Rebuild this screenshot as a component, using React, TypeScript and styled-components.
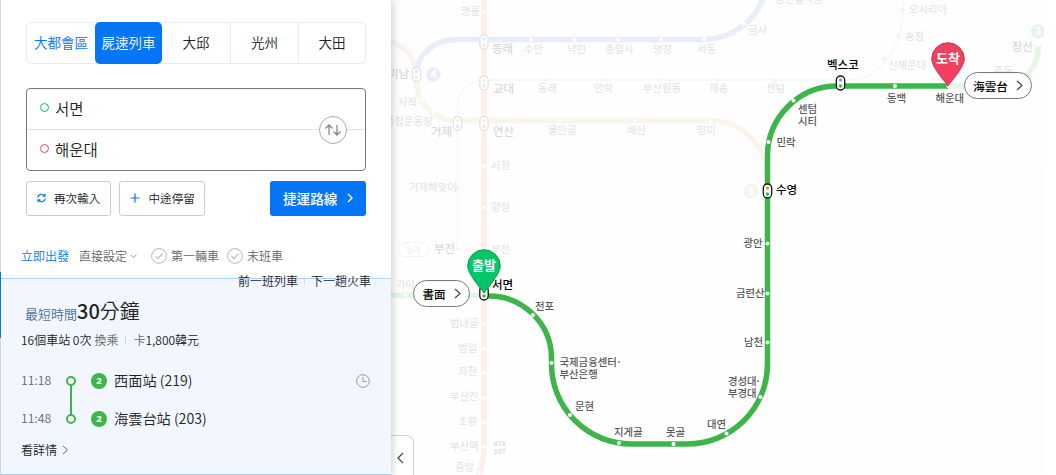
import React from "react";
import styled, { createGlobalStyle } from "styled-components";

const Global = createGlobalStyle`
  body { margin: 0; background: #fff; overflow: hidden; }
  * { box-sizing: border-box; }
  button { font: inherit; padding: 0; margin: 0; background: none; border: 0; }
`;

const GREEN = "#3db54a";
const BLUE = "#0475f4";

const Page = styled.div`
  position: relative;
  display: flex;
  width: 1056px;
  height: 475px;
  overflow: hidden;
  font-family: "Noto Sans CJK KR", "Noto Sans CJK TC", sans-serif;
  font-weight: 350;
  color: #222;
`;

const Panel = styled.aside`
  position: relative;
  z-index: 2;
  flex: none;
  width: 391px;
  height: 475px;
  display: flex;
  flex-direction: column;
  background: #fff;
  border-left: 1px solid #d5d5d5;
  box-shadow: 1px 0 8px rgba(0, 0, 0, 0.22);
`;

const Tabs = styled.nav`
  display: flex;
  width: 340px;
  height: 42px;
  margin: 22px 0 0 25px;
  border: 1px solid #ebebeb;
  border-radius: 5px;
`;

const Tab = styled.button<{ $w: number; $active?: boolean; $blue?: boolean; $line?: boolean }>`
  width: ${(p) => p.$w}px;
  height: ${(p) => (p.$active ? 42 : 40)}px;
  margin-top: ${(p) => (p.$active ? -1 : 0)}px;
  padding-bottom: 1px;
  font-size: 13.5px;
  line-height: 39px;
  text-align: center;
  white-space: nowrap;
  color: ${(p) => (p.$active ? "#fff" : p.$blue ? BLUE : "#222")};
  background: ${(p) => (p.$active ? BLUE : "transparent")};
  border-radius: ${(p) => (p.$active ? "5px" : "0")};
  border-right: ${(p) => (p.$line ? "1px solid #ebebeb" : "0")};
`;

const SearchBox = styled.div`
  position: relative;
  width: 340px;
  height: 83px;
  margin: 24px 0 0 25px;
  border: 1px solid #777;
  border-radius: 4px;
`;

const Field = styled.div<{ $line?: boolean }>`
  display: flex;
  align-items: center;
  gap: 6px;
  height: ${(p) => (p.$line ? 41 : 40)}px;
  padding: 0 0 3px 13px;
  font-size: 15.5px;
  line-height: 36px;
  color: #222;
  border-bottom: ${(p) => (p.$line ? "1px solid #e2e2e2" : "0")};
`;

const Ring = styled.i<{ $c: string }>`
  width: 9px;
  height: 9px;
  border: 1.5px solid ${(p) => p.$c};
  border-radius: 50%;
`;

const Swap = styled.button`
  position: absolute;
  right: 18px;
  top: 27px;
  width: 28px;
  height: 28px;
  border: 1px solid #aaa;
  border-radius: 50%;
  background: #fff;
  display: flex;
  align-items: center;
  justify-content: center;
`;

const Actions = styled.div`
  display: flex;
  gap: 8px;
  width: 340px;
  height: 35px;
  margin: 10px 0 0 25px;
`;

const Outline = styled.button<{ $w: number; $gap: number }>`
  width: ${(p) => p.$w}px;
  display: flex;
  align-items: center;
  gap: ${(p) => p.$gap}px;
  padding: 0 0 1px 10px;
  border: 1px solid #ccc;
  border-radius: 3px;
  font-size: 11.6px;
  white-space: nowrap;
  color: #222;
`;

const Primary = styled.button`
  width: 96px;
  margin-left: auto;
  display: flex;
  align-items: center;
  gap: 10px;
  padding: 0 0 1px 13px;
  border-radius: 3px;
  background: ${BLUE};
  color: #fff;
  font-size: 13.6px;
  font-weight: 500;
  white-space: nowrap;
`;

const Options = styled.div`
  display: flex;
  align-items: center;
  height: 20px;
  margin: 30px 0 0 20px;
  font-size: 12px;
  line-height: 20px;
  color: #666;
  white-space: nowrap;
`;

const Now = styled.span`
  width: 58px;
  color: ${BLUE};
`;

const Choice = styled.span<{ $w: number; $gap: number }>`
  display: flex;
  align-items: center;
  gap: ${(p) => p.$gap}px;
  width: ${(p) => p.$w}px;
`;

const Result = styled.section`
  position: relative;
  margin-top: 12px;
  height: 197px;
  padding-left: 20px;
  background: #f2f7ff;
  border-top: 1px solid #a9cffb;
  border-bottom: 1px solid #a9cffb;
  white-space: nowrap;
`;

const Marker = styled.i`
  position: absolute;
  left: -1px;
  top: -7px;
  width: 1px;
  height: 66px;
  background: ${BLUE};
`;

const Trains = styled.div`
  display: flex;
  justify-content: flex-end;
  align-items: center;
  gap: 6px;
  height: 16px;
  margin-top: -6px;
  padding-right: 20px;
  font-size: 12px;
  line-height: 16px;
`;

const Divider = styled.i`
  width: 1px;
  height: 8px;
  background: #d4d8df;
`;

const Duration = styled.div`
  display: flex;
  align-items: baseline;
  height: 30px;
  margin-top: 7px;
  padding-left: 4px;
  line-height: 30px;
`;

const Kind = styled.span`
  font-size: 13px;
  color: #4c7094;
`;

const Minutes = styled.span`
  font-size: 20px;
  line-height: 30px;
  color: #222;
  b { font-weight: 500; }
`;

const Summary = styled.div`
  display: flex;
  align-items: center;
  height: 18px;
  margin-top: 5px;
  font-size: 12px;
  line-height: 18px;
`;

const Muted = styled.span`
  color: #666;
`;

const Gap = styled.i<{ $w: number }>`
  width: ${(p) => p.$w}px;
`;

const Route = styled.div`
  display: flex;
  margin-top: 22px;
`;

const Times = styled.div`
  display: grid;
  grid-template-rows: 38px 20px;
  width: 42px;
  font-size: 12.3px;
  line-height: 19px;
  color: #666;
`;

const Stops = styled.div`
  display: grid;
  grid-template-rows: 38px 20px;
  margin-left: 12px;
  width: 240px;
`;

const Stop = styled.div`
  display: flex;
  align-items: center;
  gap: 7px;
  height: 19px;
  font-size: 14.2px;
  line-height: 19px;
`;

const Badge = styled.i`
  width: 16px;
  height: 16px;
  margin-top: 1px;
  border-radius: 50%;
  background: ${GREEN};
  color: #fff;
  font: 700 9.5px/16px "Noto Sans", sans-serif;
  text-align: center;
`;

const Clock = styled.svg`
  margin: 3px 0 0 25px;
`;

const Detail = styled.div`
  display: flex;
  align-items: center;
  gap: 5px;
  height: 20px;
  margin-top: 11px;
  font-size: 12px;
  line-height: 20px;
`;

const Fold = styled.button`
  position: absolute;
  z-index: 1;
  left: 391px;
  top: 435px;
  width: 23px;
  height: 46px;
  padding-right: 3px;
  background: #fff;
  border: 1px solid #d0d0d0;
  border-left: 0;
  border-radius: 0 8px 8px 0;
  display: flex;
  align-items: center;
  justify-content: center;
`;

const MapArea = styled.main`
  flex: none;
  width: 665px;
  height: 475px;
`;

const MapSvg = styled.svg`
  display: block;
  font-weight: 400;
  text { font-size: 10.4px; font-family: "Noto Sans CJK KR", sans-serif; }
`;

const Pill = styled.button<{ $x: number; $y: number; $w: number }>`
  position: absolute;
  left: ${(p) => p.$x}px;
  top: ${(p) => p.$y}px;
  width: ${(p) => p.$w}px;
  height: 27px;
  display: flex;
  align-items: center;
  justify-content: center;
  gap: 8px;
  background: #fff;
  border: 1px solid #777;
  border-radius: 14px;
  color: #000;
  font-size: 11.5px;
  font-weight: 500;
  white-space: nowrap;
`;

const Chevron = ({ w = 5, h = 9, c = "#444", left = false, sw = 1.2 }) => (
  <svg width={w + 2} height={h + 2} viewBox={`-1 -1 ${w + 2} ${h + 2}`} fill="none" stroke={c} strokeWidth={sw}>
    <path d={left ? `M${w} 0L0 ${h / 2}L${w} ${h}` : `M0 0L${w} ${h / 2}L0 ${h}`} />
  </svg>
);

const Check = () => (
  <svg width="16" height="16" viewBox="0 0 16 16" fill="none" stroke="#c4c4c4" strokeWidth="1.1">
    <circle cx="8" cy="8" r="7.4" />
    <path d="M4.5 8l2.5 2.5L11.5 5.7" strokeWidth="1.4" />
  </svg>
);

type Label = [string, number, number];

const routeLabels: Label[] = [
  ["전포", 535, 310], ["국제금융센터", 559.5, 366], ["부산은행", 559.5, 377.5],
  ["문현", 575, 410], ["지게골", 614, 436], ["못골", 666, 436], ["대연", 707, 428],
  ["경성대", 728, 384.5], ["부경대", 728, 396.5], ["남천", 744, 345.5],
  ["금련산", 736, 296.5], ["광안", 743.5, 247], ["민락", 776.5, 145.5],
  ["센텀", 798, 113], ["시티", 798, 125], ["동백", 887, 102], ["해운대", 935.5, 102],
];

const fadedLabels: Label[] = [
  ["명륜", 461, 15], ["수안", 524, 53], ["낙민", 567, 53], ["충렬사", 605, 53], ["명장", 653, 53],
  ["서동", 697, 53], ["금사", 748, 34], ["동래", 538, 92], ["안락", 594, 92], ["부산원동", 643, 92],
  ["재송", 709, 92], ["센텀", 766, 92], ["사직", 398, 106], ["종합운동장", 385, 125],
  ["물만골", 548, 134], ["배산", 627, 134], ["망미", 697, 134], ["시청", 491, 169],
  ["거제해맞이", 409, 191], ["양정", 491, 211], ["부전", 491, 252.5], ["가야", 396, 288],
  ["범내골", 450, 327], ["범일", 458, 352], ["좌천", 458, 375], ["부산진", 450, 400],
  ["초량", 458, 425], ["부산역", 450, 450], ["중앙", 455, 471], ["오시리아", 909, 13],
  ["송정", 905, 40], ["신해운대", 888, 69], ["중동", 994, 75], ["경전철사상", 775, 3],
];

const hubLabels: Label[] = [
  ["동래", 492, 53], ["교대", 493, 92.5], ["연산", 493, 136], ["거제", 431, 136],
  ["미남", 388, 78], ["부전", 434, 252.5], ["장산", 1012, 51],
];

const dots = (pts: number[][], fill: string, r = 2) =>
  pts.map(([x, y]) => <circle key={`${x}-${y}`} cx={x} cy={y} r={r} fill={fill} />);

const Hub = ({ x, y, a, b, c = "#e3e3e3" }: { x: number; y: number; a: string; b: string; c?: string }) => (
  <g>
    <rect x={x - 4.2} y={y - 7} width="8.4" height="14" rx="4.2" fill="#fff" stroke={c} strokeWidth="1.3" />
    <circle cx={x} cy={y - 3} r="1.7" fill={a} />
    <circle cx={x} cy={y + 3} r="1.7" fill={b} />
  </g>
);

const Pin = ({ x, y, fill, stroke, label }: { x: number; y: number; fill: string; stroke: string; label: string }) => (
  <g transform={`translate(${x} ${y})`}>
    <path d="M0 43.5C-2 40-16.3 25-16.3 16.5A16.3 16.3 0 0 1 16.3 16.5C16.3 25 2 40 0 43.5Z" fill={fill} stroke={stroke} />
    <text x="0" y="20.5" textAnchor="middle" fill="#fff" style={{ fontSize: 13, fontWeight: 700 }}>{label}</text>
  </g>
);

const LineBadge = ({ x, y, n, fill }: { x: number; y: number; n: string; fill: string }) => (
  <g>
    <circle cx={x} cy={y} r="7.2" fill={fill} />
    <text x={x} y={y + 3.6} textAnchor="middle" fill="#fff" fontWeight="700">{n}</text>
  </g>
);

const SubwayMap = () => (
  <MapSvg width="665" height="475" viewBox="391 0 665 475" fill="none">
    <rect x="391" width="653" height="475" fill="#fefefe" />
    <path d="M1044 169L1032 174H880Q868 176 858 186L825 221Q818 230 825 240L888 304Q897 311 906 304Q920 300 923 314V474H1044Z" fill="#fcfdfe" />

    <g strokeWidth="5.5">
      <path d="M484 0V447Q484 461 478 476" stroke="#ffede6" />
      <path d="M391 42C405 46 416.5 60 416.5 75V82A40 38.5 0 0 0 455 120.5H710A57 57 0 0 1 767 172" stroke="#faf5ea" />
      <path d="M416.5 74A40 34.5 0 0 1 456 39.5H705A64 64 0 0 0 764 -4" stroke="#e9edf7" />
      <path d="M391 295.5H484M948 86H1003A35 41 0 0 0 1038.5 45" stroke="#e6f5e7" />
    </g>
    <path d="M457.5 249V107A27 27 0 0 1 484 80H850C880 80 903 45 903 10V0" stroke="#f3f7fc" strokeWidth="1.5" />
    {dots([[545.5, 80], [603, 80], [660, 80], [717.5, 80], [774.5, 80], [457.5, 187.5], [457.5, 249], [902.5, 10], [898, 36], [884, 58.5]], "#edf2fa", 1.8)}
    {dots([[484, 12], [531, 39.5], [574.5, 39.5], [618, 39.5], [661, 39.5], [704.5, 39.5], [743.5, 23.5], [421.5, 99.5], [434, 112.5], [559.5, 120.5], [635, 120.5], [710.5, 121.5], [484, 166], [484, 207.5], [484, 249], [405.5, 295.5], [484, 324], [484, 349], [484, 373], [484, 398], [484, 422.5], [484, 447], [479, 472.5], [1038.5, 45]], "#fff")}

    {fadedLabels.map(([t, x, y]) => <text key={`${x}${y}`} x={x} y={y} fill="#e2e2e2">{t}</text>)}
    {hubLabels.map(([t, x, y]) => <text key={`${x}${y}`} x={x} y={y} fill="#d2d2d2" style={{ fontSize: 11.5 }}>{t}</text>)}
    <rect x="398.5" y="242.5" width="30" height="14" rx="7" fill="#fff" stroke="#edf3fa" />
    <text x="413.5" y="252.5" textAnchor="middle" fill="#e7effa" style={{ fontSize: 8 }}>동해</text>
    <text x="493" y="446" fill="#d5dff0" style={{ fontSize: 6.5, fontWeight: 700, fontStyle: "italic" }}>KTX</text>
    <text x="493" y="454" fill="#e0e0e5" style={{ fontSize: 6.5, fontWeight: 700, fontStyle: "italic" }}>SRT</text>
    <LineBadge x={433.5} y={74.5} n="4" fill="#e7ecf7" />
    <LineBadge x={751} y={191} n="3" fill="#faf3e9" />
    <LineBadge x={1038} y={31.5} n="2" fill="#e5f5e7" />
    <rect x="1044" width="12" height="475" fill="#fff" />
    <Hub x={484} y={42} a="#dfe6f5" b="#fde3d9" />
    <Hub x={484} y={83} a="#e9f1fb" b="#fde3d9" />
    <Hub x={484} y={123.5} a="#f7efdf" b="#fde3d9" />
    <Hub x={457.5} y={123.5} a="#f7efdf" b="#dfe6f5" />
    <Hub x={416.5} y={74.5} a="#dfe6f5" b="#f7efdf" />

    <path d="M484 296H489A62.5 62.5 0 0 1 551.5 358V364A80 80 0 0 0 631.5 444H687.5A80 80 0 0 0 767.5 364V156A70 70 0 0 1 837.5 86H948" stroke={GREEN} strokeWidth="5.5" />
    {dots([[533, 315], [551.5, 363], [570, 415], [619, 443], [673.5, 444], [726.5, 433.5], [760.5, 397], [767.5, 342.5], [767.5, 293.5], [767.5, 243.5], [768.5, 142], [793.5, 100.5], [895, 86], [948.5, 86]], "#fff")}
    <Hub x={484} y={293} a="#f58258" b={GREEN} c="#111" />
    <Hub x={767.5} y={191} a="#e09a3c" b={GREEN} c="#111" />
    <Hub x={840.5} y={83} a="#73a4dc" b={GREEN} c="#111" />
    <g fill="#5a5a5a" fontWeight="500">
      {routeLabels.map(([t, x, y]) => <text key={`${x}${y}`} x={x} y={y}>{t}</text>)}
      <text x="616" y="366">·</text>
      <text x="755" y="384.5">·</text>
    </g>
    <g fill="#000" fontWeight="500">
      <text x="492" y="289" style={{ fontSize: 11.5 }}>서면</text>
      <text x="776" y="194" style={{ fontSize: 11.5 }}>수영</text>
      <text x="827" y="69" style={{ fontSize: 11.5 }}>벡스코</text>
    </g>
    <Pin x={484} y={249.5} fill="#06c568" stroke="#079a50" label="출발" />
    <Pin x={948} y={42.5} fill="#f2405f" stroke="#b83a52" label="도착" />
  </MapSvg>
);

export default function App() {
  return (
    <Page>
      <Global />
      <Panel>
        <Tabs>
          <Tab $w={68} $blue>大都會區</Tab>
          <Tab $w={67} $active>屍速列車</Tab>
          <Tab $w={69} $line>大邱</Tab>
          <Tab $w={68} $line>光州</Tab>
          <Tab $w={66}>大田</Tab>
        </Tabs>
        <SearchBox>
          <Field $line><Ring $c="#06c568" />서면</Field>
          <Field><Ring $c="#ef4565" />해운대</Field>
          <Swap>
            <svg width="18" height="14" viewBox="0 0 18 14" fill="none" stroke="#888" strokeWidth="1.3">
              <path d="M5 12V2M1.5 5.5L5 2L8.5 5.5M13 2V12M9.5 8.5L13 12L16.5 8.5" />
            </svg>
          </Swap>
        </SearchBox>
        <Actions>
          <Outline $w={85} $gap={8}>
            <svg width="9" height="10" viewBox="0 0 9 10" fill="none" stroke={BLUE} strokeWidth="1.2">
              <path d="M.7 4.5A3.8 3.8 0 0 1 7.5 2.8M8.3 5.5A3.8 3.8 0 0 1 1.5 7.2M8 .8V3.2H5.5M1 9.2V6.8H3.5" />
            </svg>
            再次輸入
          </Outline>
          <Outline $w={86} $gap={8.5}>
            <svg width="10" height="10" viewBox="0 0 10 10" stroke={BLUE} strokeWidth="1.2"><path d="M5 .5V9.5M.5 5H9.5" /></svg>
            中途停留
          </Outline>
          <Primary>捷運路線<Chevron w={4} h={8} c="#fff" sw={1.4} /></Primary>
        </Actions>
        <Options>
          <Now>立即出發</Now>
          <Choice $w={72} $gap={3}>
            直接設定
            <svg width="7" height="5" viewBox="0 0 7 5" fill="none" stroke="#999"><path d="M.5 .7L3.5 3.7L6.5 .7" /></svg>
          </Choice>
          <Choice $w={76} $gap={4}><Check />第一輛車</Choice>
          <Choice $w={60} $gap={4}><Check />末班車</Choice>
        </Options>
        <Result>
          <Marker />
          <Trains><span>前一班列車</span><Divider /><span>下一趟火車</span></Trains>
          <Duration><Kind>最短時間</Kind><Minutes><b>30</b>分鐘</Minutes></Duration>
          <Summary>
            <span>16個車站 0次</span><Gap $w={3} /><Muted>換乘</Muted>
            <Gap $w={7} /><Divider /><Gap $w={7} />
            <Muted>卡</Muted><span>1,800韓元</span>
          </Summary>
          <Route>
            <Times><span>11:18</span><span>11:48</span></Times>
            <svg width="16" height="58" viewBox="0 0 16 58" fill="#fff" stroke={GREEN} strokeWidth="2">
              <path d="M8 14V44" />
              <circle cx="8" cy="10" r="4" /><circle cx="8" cy="48" r="4" />
            </svg>
            <Stops>
              <Stop><Badge>2</Badge>西面站 (219)</Stop>
              <Stop><Badge>2</Badge>海雲台站 (203)</Stop>
            </Stops>
            <Clock width="14" height="14" viewBox="0 0 14 14" fill="none" stroke="#999">
              <circle cx="7" cy="7" r="6.3" /><path d="M7 3V7.5H10.5" />
            </Clock>
          </Route>
          <Detail>看詳情<Chevron w={4.5} h={8} c="#666" sw={1} /></Detail>
        </Result>
      </Panel>
      <MapArea><SubwayMap /></MapArea>
      <Fold aria-label="collapse"><Chevron left w={5} h={10} /></Fold>
      <Pill $x={413} $y={280} $w={57}>書面<Chevron /></Pill>
      <Pill $x={964} $y={72} $w={68}>海雲台<Chevron /></Pill>
    </Page>
  );
}
